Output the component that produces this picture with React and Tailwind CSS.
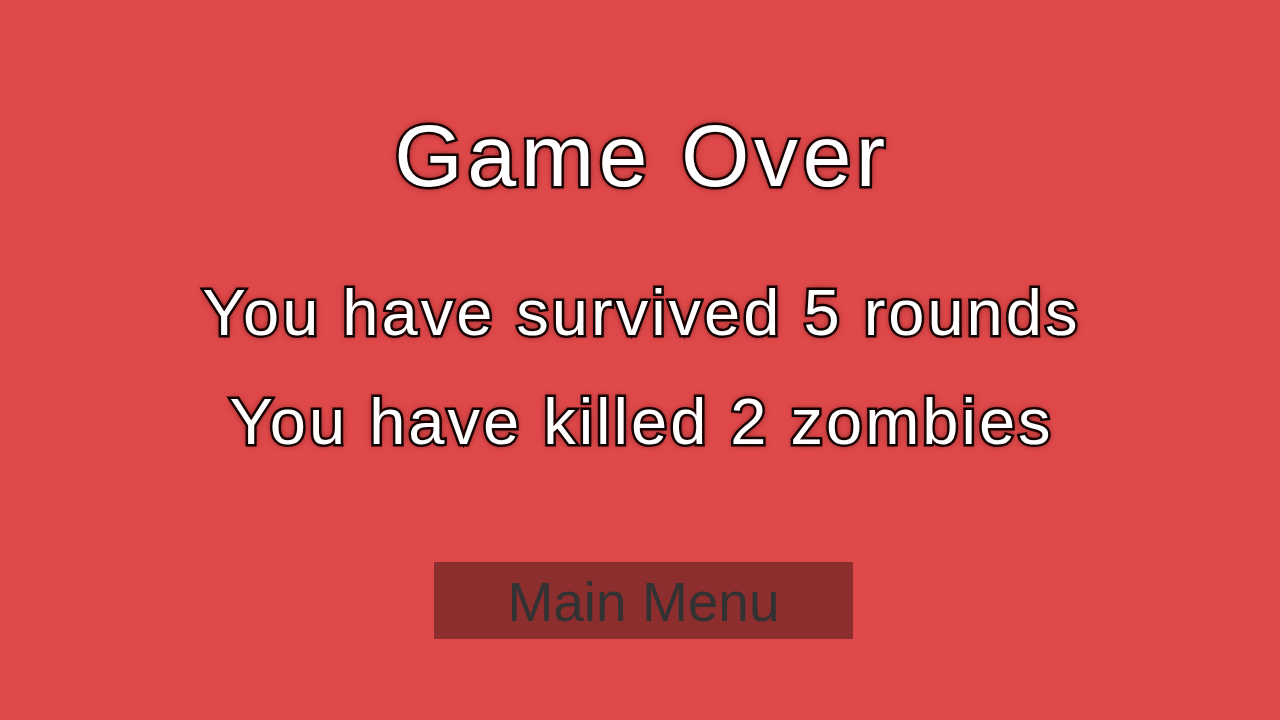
export default function App() {
  const outline =
    "[paint-order:stroke_fill] [-webkit-text-stroke:5px_#0d0505] [text-shadow:0_0_4px_rgba(40,0,0,0.9),0_0_8px_rgba(60,0,0,0.55)]";

  return (
    <div className="min-h-[720px] w-full bg-[#e0494a] flex flex-col items-center pt-[112px] font-['Liberation_Sans',Arial,sans-serif]">
      {/* title */}
      <h1 className={`text-[88px] leading-none tracking-[4.5px] pl-[4px] text-white font-normal ${outline}`}>
        Game Over
      </h1>

      {/* stats */}
      <div className="mt-[80px] flex flex-col items-center gap-[44px]">
        <p className={`text-[65px] leading-none tracking-[3px] pl-[3px] text-white ${outline}`}>
          You have survived 5 rounds
        </p>
        <p className={`text-[65px] leading-none tracking-[3px] pl-[3px] text-white ${outline}`}>
          You have killed 2 zombies
        </p>
      </div>

      <button className="mt-[108px] ml-[7px] w-[419px] h-[77px] pt-[3px] bg-[#8c2d2e] flex items-center justify-center text-[55px] leading-none text-[#323232]">
        Main Menu
      </button>
    </div>
  );
}
